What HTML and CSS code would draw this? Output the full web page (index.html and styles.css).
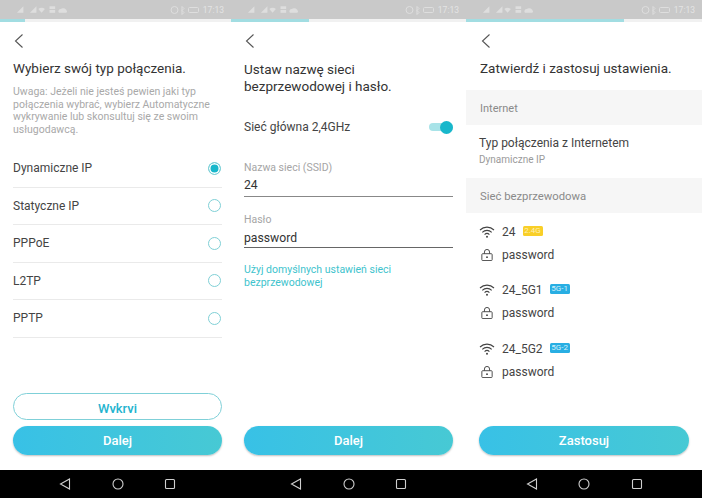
FILE: index.html
```html
<!DOCTYPE html>
<html lang="pl">
<head>
<meta charset="utf-8">
<title>Konfiguracja</title>
<link rel="stylesheet" href="styles.css">
</head>
<body>
<svg class="defs" width="0" height="0">
  <symbol id="back" viewBox="0 0 12 16"><path d="M9.500 1.500 2.500 8l7 6.500" fill="none" stroke="#555" stroke-width="1.100"/></symbol>
  <symbol id="wifi" viewBox="0 0 16 12"><g fill="none" stroke="#444" stroke-width="1.100"><path d="M1 4a10 10 0 0 1 14 0"/><path d="M3.300 6.300a6.800 6.800 0 0 1 9.400 0"/><path d="M5.600 8.600a3.400 3.400 0 0 1 4.800 0"/></g><circle cx="8" cy="10.800" r="1" fill="#444"/></symbol>
  <symbol id="lock" viewBox="0 0 14 14"><g fill="none" stroke="#444" stroke-width="1.100"><rect x="1" y="5.500" width="12" height="8" rx="1"/><path d="M4 5.500V3.500a3 3 0 0 1 6 0v2"/></g><circle cx="7" cy="9.500" r="1.100" fill="#444"/></symbol>
  <symbol id="status" viewBox="0 0 60 10"><g fill="#dedede"><path d="M2 8 9 1v7z"/><path d="M16 8l7-7v7z"/><path d="M25 4a5 5 0 0 1 7 0l-3.500 4z"/><rect x="37" y="1" width="6" height="3"/><rect x="37" y="5" width="6" height="3"/><path d="M47 8a2.500 2.500 0 0 1 2-4 4 4 0 0 1 6 1 2 2 0 0 1 0 3z"/></g></symbol>
  <symbol id="status-r" viewBox="0 0 30 10"><g fill="none" stroke="#dedede"><circle cx="4.500" cy="5" r="3.500"/><path d="M12 1.500l2 2-2 2 2 2-2 2z"/><rect x="18.500" y="2.500" width="10" height="5" rx="1"/></g></symbol>
  <symbol id="nav-back" viewBox="0 0 14 14"><path d="M11.500 2v10L2.500 7z" fill="none" stroke="#cfcfcf" stroke-width="1.100"/></symbol>
  <symbol id="nav-home" viewBox="0 0 14 14"><circle cx="7" cy="7" r="5" fill="none" stroke="#cfcfcf" stroke-width="1.100"/></symbol>
  <symbol id="nav-recent" viewBox="0 0 14 14"><rect x="2.500" y="2.500" width="9" height="9" rx="1" fill="none" stroke="#cfcfcf" stroke-width="1.100"/></symbol>
</svg>
<main class="phones">

<section class="phone phone-a">
  <div class="statusbar"><svg class="status-icons"><use href="#status"/></svg><span class="clock"><svg class="status-right"><use href="#status-r"/></svg>17:13</span></div>
  <div class="progress"><i class="fill fill-a"></i></div>
  <div class="content">
    <svg class="back"><use href="#back"/></svg>
    <h1>Wybierz swój typ połączenia.</h1>
    <p class="note">Uwaga: Jeżeli nie jesteś pewien jaki typ połączenia wybrać, wybierz Automatyczne wykrywanie lub skonsultuj się ze swoim usługodawcą.</p>
    <ul class="options">
      <li>Dynamiczne IP<span class="radio on"></span></li>
      <li>Statyczne IP<span class="radio"></span></li>
      <li>PPPoE<span class="radio"></span></li>
      <li>L2TP<span class="radio"></span></li>
      <li>PPTP<span class="radio"></span></li>
    </ul>
    <div class="actions">
      <div class="btn-outline"><span>Wykryj</span></div>
      <div class="btn">Dalej</div>
    </div>
  </div>
  <div class="navbar"><svg><use href="#nav-back"/></svg><svg><use href="#nav-home"/></svg><svg><use href="#nav-recent"/></svg></div>
</section>

<section class="phone phone-b">
  <div class="statusbar"><svg class="status-icons"><use href="#status"/></svg><span class="clock"><svg class="status-right"><use href="#status-r"/></svg>17:13</span></div>
  <div class="progress"><i class="fill fill-b"></i></div>
  <div class="content">
    <svg class="back"><use href="#back"/></svg>
    <h1>Ustaw nazwę sieci bezprzewodowej i hasło.</h1>
    <div class="toggle-row">Sieć główna 2,4GHz<span class="toggle"><i></i></span></div>
    <div class="field"><label>Nazwa sieci (SSID)</label><div class="value">24</div></div>
    <div class="field field-2"><label>Hasło</label><div class="value">password</div></div>
    <p class="link">Użyj domyślnych ustawień sieci bezprzewodowej</p>
    <div class="actions"><div class="btn">Dalej</div></div>
  </div>
  <div class="navbar"><svg><use href="#nav-back"/></svg><svg><use href="#nav-home"/></svg><svg><use href="#nav-recent"/></svg></div>
</section>

<section class="phone phone-c">
  <div class="statusbar"><svg class="status-icons"><use href="#status"/></svg><span class="clock"><svg class="status-right"><use href="#status-r"/></svg>17:13</span></div>
  <div class="progress"><i class="fill fill-c"></i></div>
  <div class="content">
    <svg class="back"><use href="#back"/></svg>
    <h1 class="title-c">Zatwierdź i zastosuj ustawienia.</h1>
    <div class="band">Internet</div>
    <div class="conn"><div class="conn-title">Typ połączenia z Internetem</div><div class="conn-sub">Dynamiczne IP</div></div>
    <div class="band band-2">Sieć bezprzewodowa</div>
    <div class="nets">
      <div class="net">
        <div class="net-row"><svg class="ico"><use href="#wifi"/></svg>24<span class="tag yellow">2.4G</span></div>
        <div class="net-row"><svg class="ico"><use href="#lock"/></svg>password</div>
      </div>
      <div class="net">
        <div class="net-row"><svg class="ico"><use href="#wifi"/></svg>24_5G1<span class="tag blue">5G-1</span></div>
        <div class="net-row"><svg class="ico"><use href="#lock"/></svg>password</div>
      </div>
      <div class="net">
        <div class="net-row"><svg class="ico"><use href="#wifi"/></svg>24_5G2<span class="tag blue">5G-2</span></div>
        <div class="net-row"><svg class="ico"><use href="#lock"/></svg>password</div>
      </div>
    </div>
    <div class="actions"><div class="btn">Zastosuj</div></div>
  </div>
  <div class="navbar"><svg><use href="#nav-back"/></svg><svg><use href="#nav-home"/></svg><svg><use href="#nav-recent"/></svg></div>
</section>

</main>
</body>
</html>
```

FILE: styles.css
```css
* { box-sizing: border-box; }
html, body { margin: 0; padding: 0; }
body { width: 702px; height: 498px; overflow: hidden; background: #fff; font-family: Roboto, "Liberation Sans", sans-serif; color: #3c3c3c; }
.defs { display: block; height: 0; }
.phones { display: flex; height: 498px; }
.phone { display: flex; flex-direction: column; height: 498px; }
.phone-a { width: 231px; }
.phone-b { width: 235px; }
.phone-c { width: 236px; }

.statusbar { flex: none; height: 19px; background: #c9c9c9; display: flex; align-items: center; justify-content: space-between; padding: 0 7px 0 15px; }
.status-icons { width: 56px; height: 10px; }
.status-right { width: 30px; height: 10px; margin-right: 3px; }
.clock { display: flex; align-items: center; font-size: 8.500px; color: #e4e4e4; white-space: nowrap; }
.progress { flex: none; height: 3px; background: #f1f1f1; }
.fill { display: block; height: 3px; background: #a2dde2; }
.fill-a { width: 25px; }
.fill-b { width: 78px; }
.fill-c { width: 158px; }

.content { flex: 1; min-height: 0; display: flex; flex-direction: column; padding: 11px 0 0; }
.phone-a .content { padding-left: 13px; padding-right: 9px; }
.phone-b .content { padding-left: 13px; padding-right: 13px; }
.back { flex: none; width: 12px; height: 16px; display: block; margin-left: 0; }
.phone-c .back { margin-left: 14px; }
h1 { margin: 11px 0 0; font-size: 13.500px; line-height: 17px; font-weight: 400; color: #333; }
.phone-b h1 { margin-top: 12px; }
.note { margin: 9px 0 0; font-size: 10.500px; line-height: 12.500px; color: #a9a9a9; }

.options { list-style: none; margin: 14px 0 0; padding: 0; }
.options li { height: 37.500px; display: flex; align-items: center; justify-content: space-between; font-size: 12px; color: #444; border-bottom: 1px solid #eaeaea; padding-right: 1px; }
.radio { width: 13px; height: 13px; border: 1px solid #7fd0d6; border-radius: 50%; background: #fff; }
.radio.on { background: #18b7cb; box-shadow: inset 0 0 0 1.500px #fff; }

.actions { margin-top: auto; padding-bottom: 15px; display: flex; flex-direction: column; gap: 6px; }
.btn { height: 29px; border-radius: 15px; background: linear-gradient(90deg, #38c1e6, #47c9d4); color: #fff; font-size: 13px; font-weight: 500; display: flex; align-items: center; justify-content: center; box-shadow: 0 1px 2px rgba(0,0,0,.25); }
.btn-outline { height: 27px; border-radius: 14px; border: 1px solid #7fd0d8; overflow: hidden; color: #25b4cf; font-size: 13px; font-weight: 500; display: flex; align-items: flex-start; justify-content: center; line-height: 30px; }
.btn-outline span { display: block; height: 19px; overflow: hidden; }

.toggle-row { margin-top: 24px; height: 16px; display: flex; align-items: center; justify-content: space-between; font-size: 12px; color: #444; }
.toggle { width: 24px; height: 8px; border-radius: 4px; background: #a8e3e8; position: relative; }
.toggle i { position: absolute; right: 0; top: -2.500px; width: 13px; height: 13px; border-radius: 50%; background: #18b7cb; }

.field { margin-top: 26px; }
.field-2 { margin-top: 16px; }
.field label { display: block; font-size: 10.500px; line-height: 13px; color: #a5a5a5; }
.value { margin-top: 3px; height: 20px; font-size: 12.200px; line-height: 16px; color: #333; border-bottom: 1px solid #888; }
.field-2 .value { margin-top: 2px; line-height: 20px; border-bottom-color: #666; }
.link { margin: 15px 0 0; font-size: 10.500px; line-height: 13px; color: #3ec3cd; }

.title-c { padding-left: 14px; }
.band { margin-top: 13px; height: 35px; padding: 1px 0 0 14px; background: #f6f6f6; display: flex; align-items: center; font-size: 11px; color: #8a8a8a; }
.band-2 { margin-top: 0; font-size: 11.300px; }
.conn { height: 53px; padding: 11px 0 0 13px; }
.conn-title { font-size: 12px; line-height: 15px; color: #444; }
.conn-sub { margin-top: 2px; font-size: 10px; line-height: 13px; color: #9a9a9a; }
.nets { padding: 7px 0 0 13px; display: flex; flex-direction: column; gap: 12.500px; }
.net-row { height: 23px; display: flex; align-items: center; font-size: 12px; color: #444; }
.ico { width: 16px; height: 12px; margin-right: 7px; flex: none; }
.tag { margin-left: 7px; margin-top: -2px; height: 10px; width: 20px; border-radius: 1.500px; font-size: 8px; line-height: 10px; text-align: center; color: #fff; }
.yellow { background: #f9cf28; color: #fff0b5; }
.blue { background: #28aee3; color: #d6f1fb; }
.phone-c .actions { padding-left: 13px; padding-right: 13px; }

.navbar { flex: none; height: 28px; background: #000; display: flex; align-items: center; justify-content: center; gap: 38.500px; }
.phone-a .navbar { padding-left: 4px; }
.navbar svg { width: 14px; height: 14px; }
```
